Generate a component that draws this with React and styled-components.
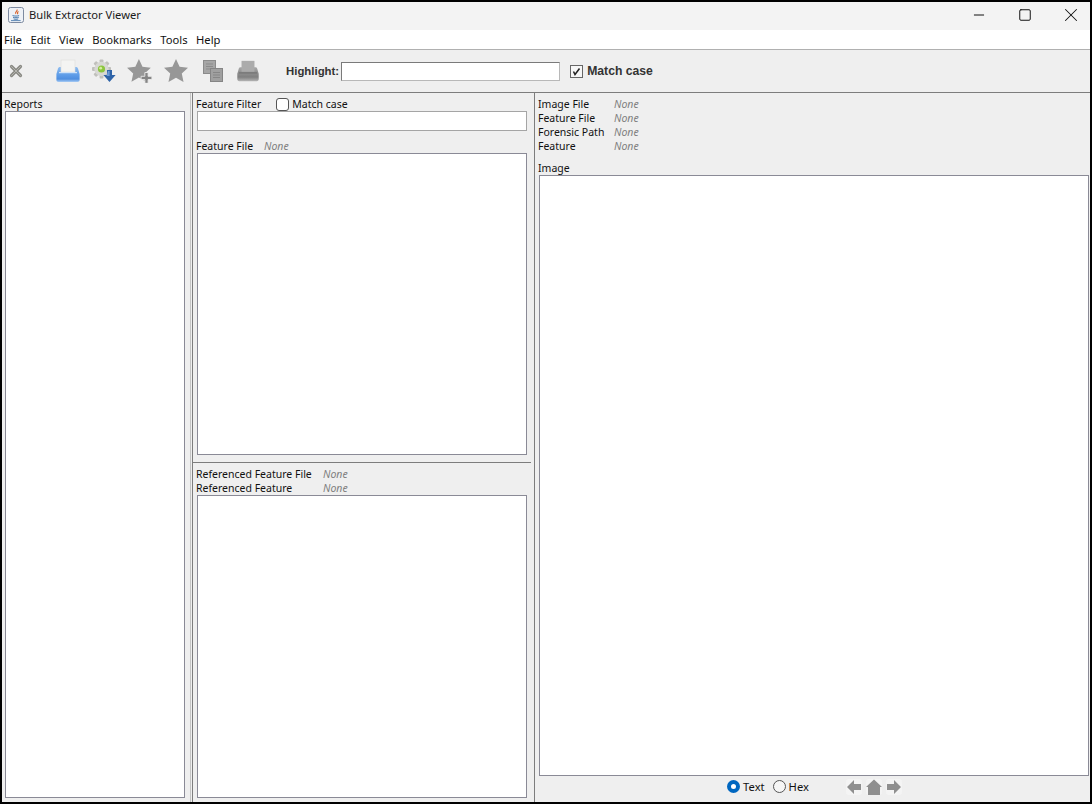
import React from "react";
import styled, { createGlobalStyle } from "styled-components";
import { Minus, Square, X } from "lucide-react";

const GlobalStyle = createGlobalStyle`
  html, body {
    margin: 0;
    padding: 0;
    background: #000;
  }
  * {
    box-sizing: border-box;
  }
`;

const FONT = `"Noto Sans", "Liberation Sans", sans-serif`;

const JavaIcon = () => (
  <svg width="16" height="16" viewBox="0 0 16 16">
    <rect x="0.5" y="0.5" width="15" height="15" rx="2" fill="#eef1f6" stroke="#7d8aa0" />
    <path d="M9 2.5c1 1.6-2.4 2.4-1.2 4.4M10.5 4.5c-1.4.8-1.2 1.6-.6 2.6" fill="none" stroke="#d9622b" strokeWidth="1.1" />
    <path d="M4.5 8.6c2 .6 5 .6 6.6 0M5 10.3c1.8.5 4.2.5 5.8 0M5.6 12c1.6.4 3.2.4 4.6 0" fill="none" stroke="#3a6ea5" strokeWidth="0.9" />
    <path d="M3 13.6h9.6" stroke="#3a6ea5" strokeWidth="0.8" />
  </svg>
);

const CloseIcon = () => (
  <svg width="14" height="14" viewBox="0 0 14 14">
    <path d="M2.5 2.5l9 9M11.5 2.5l-9 9" stroke="#8a8a84" strokeWidth="3.2" strokeLinecap="round" />
    <path d="M2.5 2.5l9 9M11.5 2.5l-9 9" stroke="#b4b4ae" strokeWidth="1" strokeLinecap="round" />
  </svg>
);

const PRINTER_BODY = "M5 8h16c1 0 1.6.5 2 1.5l1.6 5.5v6c0 1.2-.8 2-2 2H3.4c-1.2 0-2-.8-2-2v-6L3 9.500C3.400 8.500 4 8 5 8z";

const OpenIcon = () => (
  <svg width="26" height="24" viewBox="0 0 26 24">
    <defs>
      <linearGradient id="printerBody" x1="0" y1="0" x2="0" y2="1">
        <stop offset="0" stopColor="#8fbdf0" />
        <stop offset="0.55" stopColor="#5d9ce8" />
        <stop offset="0.8" stopColor="#4f8fe0" />
        <stop offset="1" stopColor="#a9ccf4" />
      </linearGradient>
    </defs>
    <path d={PRINTER_BODY} fill="url(#printerBody)" />
    <rect x="6" y="1" width="14" height="12" fill="#f4f4f2" stroke="#dcdcda" strokeWidth="0.6" />
    <rect x="4" y="13" width="18" height="1.2" fill="#cfe3f9" />
  </svg>
);

const GearIcon = () => (
  <svg width="26" height="24" viewBox="0 0 26 24">
    <g transform="translate(10.5 10)">
      {[0, 45, 90, 135].map((a) => (
        <rect key={a} x="-1.9" y="-9.500" width="3.8" height="19" rx="0.8" fill="#c0c0bc" transform={`rotate(${a})`} />
      ))}
      <circle r="7.2" fill="#d8d8d4" />
      <circle r="3.6" fill="#8cc63e" />
      <circle cx="-0.8" cy="-0.8" r="1.4" fill="#d5ee9e" />
    </g>
    <path d="M16 11h5v5h3.6l-6.1 7-6.1-7H16z" fill="#2e63a8" />
    <path d="M17 12h1.6v5h-3z" fill="#6d9bd6" />
  </svg>
);

const STAR = "M12 1l3.3 7.2 7.7.9-5.700 5.300 1.600 7.700L12 18.200 5.100 22.100l1.600-7.700L1 9.100l7.700-.9z";

const AddBookmarkIcon = () => (
  <svg width="26" height="24" viewBox="1 1 24 22.2">
    <path d={STAR} fill="#979797" />
    <path d="M17.500 13.500h3v3.500h3.500v3h-3.500v3.500h-3V20H14v-3h3.500z" fill="#858585" stroke="#eeeeee" strokeWidth="0.8" />
  </svg>
);

const BookmarkIcon = () => (
  <svg width="24" height="24" viewBox="1 1 22 22">
    <path d={STAR} fill="#979797" />
  </svg>
);

const CopyIcon = () => (
  <svg width="20" height="22" viewBox="0 0 20 22">
    <rect x="0.500" y="0.500" width="12" height="13" fill="#a6a6a6" stroke="#8b8b8b" />
    <path d="M3 4h7M3 6.500h7M3 9h4" stroke="#8b8b8b" />
    <rect x="7.500" y="8.500" width="12" height="13" fill="#a0a0a0" stroke="#858585" />
    <path d="M10 12.500h7M10 15h7M10 17.500h7" stroke="#868686" />
  </svg>
);

const PrintIcon = () => (
  <svg width="24" height="24" viewBox="0 0 26 24">
    <defs>
      <linearGradient id="printGrey" x1="0" y1="0" x2="0" y2="1">
        <stop offset="0" stopColor="#a8a8a8" />
        <stop offset="0.5" stopColor="#8a8a8a" />
        <stop offset="0.7" stopColor="#808080" />
        <stop offset="1" stopColor="#b4b4b4" />
      </linearGradient>
    </defs>
    <path d={PRINTER_BODY} fill="url(#printGrey)" />
    <rect x="6" y="1" width="14" height="12" fill="#ababab" />
    <rect x="3" y="13" width="20" height="2" fill="#7c7c7c" />
  </svg>
);

const NavLeft = () => (
  <svg width="16" height="16" viewBox="0 0 16 16">
    <rect width="16" height="16" rx="3" fill="#f4f4f4" />
    <path d="M1 8l7-7v4h7v6H8v4z" fill="#8f8f8f" />
  </svg>
);

const NavHome = () => (
  <svg width="16" height="16" viewBox="0 0 16 16">
    <rect width="16" height="16" rx="3" fill="#f4f4f4" />
    <path d="M8 0.500L16 8h-2v8H2V8H0z" fill="#8f8f8f" />
  </svg>
);

const NavRight = () => (
  <svg width="16" height="16" viewBox="0 0 16 16">
    <rect width="16" height="16" rx="3" fill="#f4f4f4" />
    <path d="M15 8l-7-7v4H1v6h7v4z" fill="#8f8f8f" />
  </svg>
);

const App = () => {
  return (
    <Frame>
      <GlobalStyle />
      <TitleBar>
        <TitleLeft>
          <JavaIcon />
          <TitleText>Bulk Extractor Viewer</TitleText>
        </TitleLeft>
        <WindowButtons>
          <WindowButton><Minus size={16} strokeWidth={1.5} /></WindowButton>
          <WindowButton><Square size={14} strokeWidth={1.7} /></WindowButton>
          <WindowButton><X size={22} strokeWidth={1.1} /></WindowButton>
        </WindowButtons>
      </TitleBar>

      <MenuBar>
        {["File", "Edit", "View", "Bookmarks", "Tools", "Help"].map((m) => (
          <MenuItem key={m}>{m}</MenuItem>
        ))}
      </MenuBar>

      <Toolbar>
        <ToolIcon $width={14} $margin={32}><CloseIcon /></ToolIcon>
        <ToolIcon $width={26} $margin={10}><OpenIcon /></ToolIcon>
        <ToolIcon $width={26} $margin={10}><GearIcon /></ToolIcon>
        <ToolIcon $width={26} $margin={11}><AddBookmarkIcon /></ToolIcon>
        <ToolIcon $width={24} $margin={15}><BookmarkIcon /></ToolIcon>
        <ToolIcon $width={20} $margin={13}><CopyIcon /></ToolIcon>
        <ToolIcon $width={24} $margin={26}><PrintIcon /></ToolIcon>
        <BoldLabel $size={11.4}>Highlight:</BoldLabel>
        <HighlightInput />
        <SquareCheck>
          <svg width="9" height="9" viewBox="0 0 9 9">
            <path d="M1.500 4.500l1.500 3L7.500 1.500" fill="none" stroke="#222" strokeWidth="1.500" />
          </svg>
        </SquareCheck>
        <BoldLabel $size={12.2}>Match case</BoldLabel>
      </Toolbar>

      <Panes>
        <ReportsPane>
          <Label>Reports</Label>
          <ListBox />
        </ReportsPane>

        <MiddlePane>
          <FilterSection>
            <FilterRow>
              <Label>Feature Filter</Label>
              <RoundCheck />
              <Label>Match case</Label>
            </FilterRow>
            <FilterInput />
            <InfoRow $top={8}>
              <InfoKey $width={68}>Feature File</InfoKey>
              <NoneValue>None</NoneValue>
            </InfoRow>
            <ListBox />
          </FilterSection>
          <SplitLine />
          <ReferencedSection>
            <InfoRow>
              <InfoKey $width={127}>Referenced Feature File</InfoKey>
              <NoneValue>None</NoneValue>
            </InfoRow>
            <InfoRow>
              <InfoKey $width={127}>Referenced Feature</InfoKey>
              <NoneValue>None</NoneValue>
            </InfoRow>
            <ListBox />
          </ReferencedSection>
        </MiddlePane>

        <ImagePane>
          {["Image File", "Feature File", "Forensic Path", "Feature"].map((k) => (
            <InfoRow key={k}>
              <InfoKey $width={76}>{k}</InfoKey>
              <NoneValue>None</NoneValue>
            </InfoRow>
          ))}
          <ImageLabel>Image</ImageLabel>
          <ListBox />
          <ImageFooter>
            <RadioOn />
            <RadioLabel>Text</RadioLabel>
            <RadioOff />
            <RadioLabel>Hex</RadioLabel>
            <NavGroup>
              <NavLeft />
              <NavHome />
              <NavRight />
            </NavGroup>
          </ImageFooter>
        </ImagePane>
      </Panes>
    </Frame>
  );
};

const Frame = styled.div`
  width: 1092px;
  height: 804px;
  border: 2px solid #000;
  display: flex;
  flex-direction: column;
  overflow: hidden;
  background: #efefef;
  font-family: ${FONT};
  color: #111;
`;

const TitleBar = styled.div`
  height: 28px;
  flex: none;
  background: #f3f3f3;
  padding-bottom: 3px;
  display: flex;
  align-items: center;
  justify-content: space-between;
`;

const TitleLeft = styled.div`
  display: flex;
  align-items: center;
  gap: 5px;
  padding-left: 6px;
`;

const TitleText = styled.span`
  font-size: 11.2px;
  color: #1a1a1a;
`;

const WindowButtons = styled.div`
  display: flex;
  margin-right: -4px;
`;

const WindowButton = styled.div`
  width: 46px;
  height: 25px;
  display: flex;
  align-items: center;
  justify-content: center;
  color: #111;
`;

const MenuBar = styled.div`
  height: 20px;
  flex: none;
  background: #fff;
  border-bottom: 1px solid #b0b0b0;
  display: flex;
  align-items: center;
  gap: 8.6px;
  padding-left: 2px;
`;

const MenuItem = styled.span`
  font-size: 11.2px;
  color: #111;
`;

const Toolbar = styled.div`
  height: 43px;
  flex: none;
  background: #efefef;
  border-bottom: 1px solid #7d7d7d;
  display: flex;
  align-items: center;
  padding-left: 7px;
`;

const ToolIcon = styled.div`
  width: ${(p) => p.$width}px;
  margin-right: ${(p) => p.$margin}px;
  display: flex;
  align-items: center;
  justify-content: center;
  flex: none;
`;

const BoldLabel = styled.span`
  font-family: "Liberation Sans", sans-serif;
  font-size: ${(p) => p.$size}px;
  font-weight: 700;
  color: #333;
`;

const HighlightInput = styled.div`
  width: 219px;
  height: 19px;
  margin: 0 10px 0 2px;
  background: #fff;
  border: 1px solid #7a7a7a;
  border-right-color: #b8b8b8;
  border-bottom-color: #b8b8b8;
`;

const SquareCheck = styled.div`
  width: 13px;
  height: 13px;
  margin-right: 4px;
  background: #f6f6f6;
  border: 1px solid #666;
  display: flex;
  align-items: center;
  justify-content: center;
`;

const Panes = styled.div`
  flex: 1;
  min-height: 0;
  display: flex;
`;

const ReportsPane = styled.div`
  width: 189px;
  flex: none;
  border-right: 1px solid #c4c4c4;
  padding: 4px 5px 4px 3px;
  display: flex;
  flex-direction: column;
`;

const Label = styled.span`
  font-size: 10.5px;
  line-height: 14px;
  height: 14px;
  margin-left: -1px;
  white-space: nowrap;
  color: #111;
`;

const ListBox = styled.div`
  flex: 1;
  min-height: 0;
  background: #fff;
  border: 1px solid #8a8a96;
`;

const MiddlePane = styled.div`
  width: 343px;
  margin-left: 1px;
  flex: none;
  display: flex;
  flex-direction: column;
  border-left: 1px solid #7d7d7d;
  border-right: 1px solid #7d7d7d;
`;

const FilterSection = styled.div`
  height: 369px;
  flex: none;
  padding: 4px 7px 7px 4px;
  display: flex;
  flex-direction: column;
`;

const FilterRow = styled.div`
  display: flex;
  align-items: center;
  height: 14px;
`;

const RoundCheck = styled.div`
  width: 13px;
  height: 13px;
  margin: 0 4px 0 15px;
  background: #fff;
  border: 1px solid #555;
  border-radius: 3px;
`;

const FilterInput = styled.div`
  height: 20px;
  flex: none;
  background: #fff;
  border: 1px solid #a5a5a5;
`;

const InfoRow = styled.div`
  display: flex;
  align-items: center;
  height: 14px;
  flex: none;
  margin-top: ${(p) => p.$top || 0}px;
`;

const InfoKey = styled.span`
  width: ${(p) => p.$width}px;
  flex: none;
  margin-left: -1px;
  font-size: 10.5px;
  white-space: nowrap;
  color: #111;
`;

const NoneValue = styled.span`
  font-size: 10.5px;
  font-style: italic;
  color: #7f7f7f;
`;

const SplitLine = styled.div`
  height: 1px;
  flex: none;
  margin-right: 3px;
  background: #7d7d7d;
`;

const ReferencedSection = styled.div`
  flex: 1;
  min-height: 0;
  padding: 4px 7px 4px 4px;
  display: flex;
  flex-direction: column;
`;

const ImagePane = styled.div`
  flex: 1;
  min-width: 0;
  padding: 4px 1px 0 4px;
  display: flex;
  flex-direction: column;
`;

const ImageLabel = styled.span`
  font-size: 10.5px;
  line-height: 14px;
  height: 14px;
  margin: 8px 0 0 -1px;
  flex: none;
  color: #111;
`;

const ImageFooter = styled.div`
  height: 26px;
  flex: none;
  padding: 0 0 5px 1px;
  display: flex;
  align-items: center;
  justify-content: center;
`;

const RadioOn = styled.div`
  width: 13px;
  height: 13px;
  border-radius: 50%;
  border: 4px solid #0067c0;
  background: #fff;
  margin-right: 3px;
`;

const RadioOff = styled.div`
  width: 13px;
  height: 13px;
  border-radius: 50%;
  border: 1px solid #555;
  background: #f6f6f6;
  margin: 0 3px 0 8px;
`;

const RadioLabel = styled.span`
  font-size: 11.2px;
  color: #111;
`;

const NavGroup = styled.div`
  display: flex;
  gap: 4px;
  margin-left: 37px;
`;

export default App;
